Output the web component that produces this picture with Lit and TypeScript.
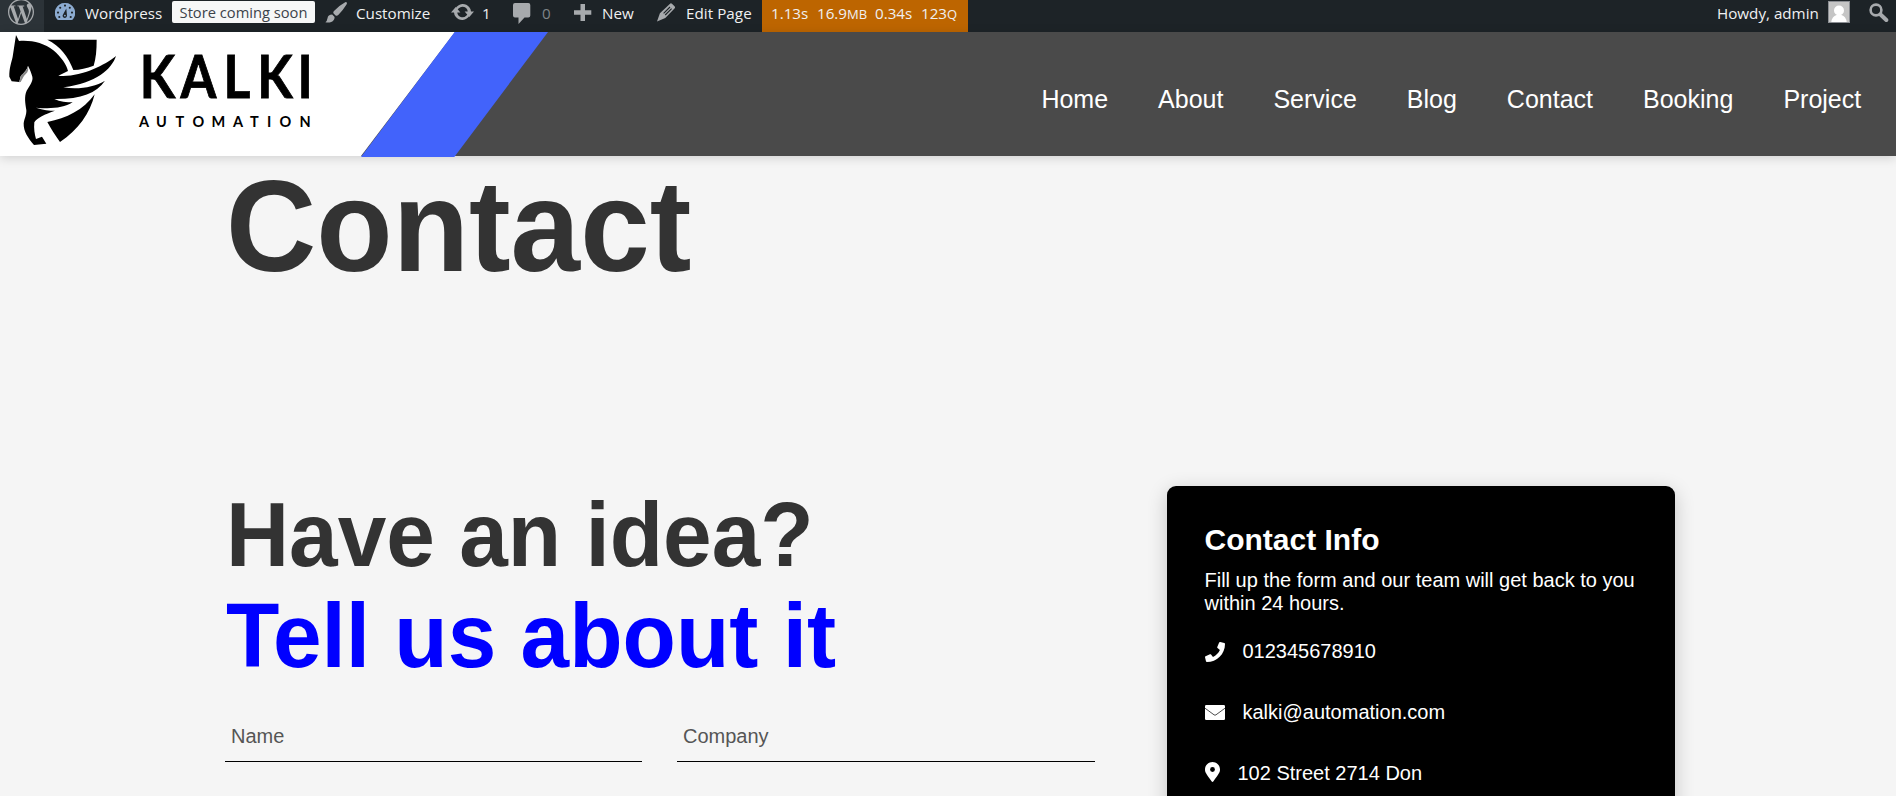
import { LitElement, html, css } from "lit";
import { customElement } from "lit/decorators.js";

const WP_PATH =
  "M21.469 6.825c.84 1.537 1.318 3.3 1.318 5.175 0 3.979-2.156 7.456-5.363 9.325l3.295-9.527c.615-1.54.82-2.771.82-3.864 0-.405-.026-.78-.07-1.11m-7.981.105c.647-.03 1.232-.105 1.232-.105.582-.075.514-.93-.067-.899 0 0-1.755.135-2.88.135-1.064 0-2.85-.15-2.85-.15-.585-.03-.661.855-.075.885 0 0 .54.061 1.125.09l1.68 4.605-2.37 7.08L5.354 6.9c.649-.03 1.234-.1 1.234-.1.585-.075.516-.93-.065-.896 0 0-1.746.138-2.874.138-.2 0-.438-.008-.69-.015C4.911 3.15 8.235 1.215 12 1.215c2.809 0 5.365 1.072 7.286 2.833-.046-.003-.091-.009-.141-.009-1.06 0-1.812.923-1.812 1.914 0 .89.513 1.643 1.06 2.531.411.72.89 1.643.89 2.977 0 .915-.354 1.994-.821 3.479l-1.075 3.585-3.9-11.61.001.014zM12 22.784c-1.059 0-2.081-.153-3.048-.437l3.237-9.406 3.315 9.087c.024.053.05.101.078.149-1.12.393-2.325.609-3.582.609M1.211 12c0-1.564.336-3.05.935-4.39L7.29 21.709C3.694 19.96 1.212 16.271 1.211 12M12 0C5.385 0 0 5.385 0 12s5.385 12 12 12 12-5.385 12-12S18.615 0 12 0";

@customElement("admin-bar")
class AdminBar extends LitElement {
  static styles = css`
    :host {
      display: grid;
      grid-template-columns: 44px 128px 143px 136px 62px 61px 83px 105px 206px 1fr 111px 41px 27px;
      height: 32px;
      background: #1d2327;
      color: #f0f0f1;
      font: 15.2px/22px "Open Sans", "Noto Sans", sans-serif;
      white-space: nowrap;
      overflow: hidden;
    }
    .item { display: flex; align-items: flex-start; }
    svg { display: block; flex: none; fill: #a7aaad; }
    .label { display: block; padding-top: 2px; }
    .wp { background: #2c3338; }
    .wp svg { margin: -1px 0 0 8px; }
    .site { padding-left: 11px; }
    .site svg { fill: #8cabd0; margin-top: 3px; }
    .site .label { margin-left: 10px; }
    .badge {
      height: 22px;
      margin-top: 1px;
      border-radius: 2px;
      background: #f6f7f7;
      color: #3c434a;
      justify-content: center;
      font-size: 14.7px;
    }
    .badge .label { padding-top: 0; }
    .customize { padding-left: 10px; }
    .customize svg { margin-top: 2px; }
    .customize .label { margin-left: 9px; }
    .updates svg { margin-top: 3px; }
    .updates .label { margin-left: 8px; }
    .comments svg { margin-top: 3px; }
    .comments .label { margin-left: 11px; color: #7f8488; }
    .new svg { margin-top: 4px; }
    .new .label { margin-left: 10px; }
    .edit svg { margin-top: 3px; }
    .edit .label { margin-left: 10px; letter-spacing: 0.05px; }
    .stats { background: #bd6500; padding-left: 9px; }
    .stats .label { width: 46px; }
    .stats .label.memory { width: 58px; }
    .stats .label.time { width: 46px; }
    small { font-size: 13px; }
    .avatar { width: 20px; height: 20px; margin-top: 1px; border: 1px solid #8c8f94; background: #c5c5c5; }
    .avatar svg { fill: #fff; }
    .search svg { margin-top: 3px; }
  `;

  render() {
    return html`
      <div class="item wp"><svg width="26" height="26" viewBox="0 0 24 24"><path d=${WP_PATH} /></svg></div>
      <div class="item site">
        <svg width="20" height="17" viewBox="0 0 20 17">
          <path d="M10 0A10 10 0 0 1 18.3 15.8Q17.6 17 16.4 17H3.6Q2.4 17 1.7 15.8A10 10 0 0 1 10 0Z" />
          <g fill="#1d2327">
            <circle cx="10" cy="2.6" r="1.05" /><circle cx="5.2" cy="4.7" r="1.05" /><circle cx="14.8" cy="4.7" r="1.05" />
            <circle cx="3" cy="9.6" r="1.05" /><circle cx="17" cy="9.6" r="1.05" />
            <circle cx="4.3" cy="14" r="1.05" /><circle cx="15.7" cy="14" r="1.05" />
            <path d="M11.3 5.5L12 12.6A2.2 2.2 0 1 1 8.2 11.2Z" />
          </g>
          <circle cx="9.9" cy="12.6" r="0.9" />
        </svg>
        <span class="label">Wordpress</span>
      </div>
      <div class="item badge"><span class="label">Store coming soon</span></div>
      <div class="item customize">
        <svg width="22" height="21" viewBox="0 0 22 21">
          <path d="M21.5 0.2Q22.4 1 21.5 2.4Q17.6 8.6 13.5 12.7Q12 14.2 10.6 13.5L8.6 11.6Q7.8 10.3 9 9Q13.5 4 20.2 0.3Q21 -0.2 21.5 0.2Z" />
          <path d="M7.2 12.6L9.6 15Q9.6 18.6 6.2 20Q3.5 21 0.4 20.3Q2.2 18.8 2.5 16.2Q3 12.7 7.2 12.6Z" />
        </svg>
        <span class="label">Customize</span>
      </div>
      <div class="item updates">
        <svg width="23" height="18" viewBox="0 0 23 18">
          <path d="M4.5 5.5A8.2 8.2 0 0 1 18.5 4.5Q19.8 6.2 20 8.6H23L18.3 14L13.6 8.6H16.7A5.2 5.2 0 0 0 7.8 5.3L5.9 7.2Z" />
          <path d="M18.5 12.5A8.2 8.2 0 0 1 4.5 13.5Q3.2 11.8 3 9.4H0L4.7 4L9.4 9.4H6.3A5.2 5.2 0 0 0 15.2 12.7L17.1 10.8Z" />
        </svg>
        <span class="label">1</span>
      </div>
      <div class="item comments">
        <svg width="18" height="21" viewBox="0 0 18 21"><path d="M2 0H15.3Q17.3 0 17.3 2V12.5Q17.3 14.5 15.3 14.5H11.5L5.5 21V14.5H2Q0 14.5 0 12.5V2Q0 0 2 0Z" /></svg>
        <span class="label">0</span>
      </div>
      <div class="item new">
        <svg width="18" height="17" viewBox="0 0 18 17"><path d="M6.5 0H11V6.3H17.3V10.7H11V17H6.5V10.7H0V6.3H6.5Z" /></svg>
        <span class="label">New</span>
      </div>
      <div class="item edit">
        <svg width="19" height="19" viewBox="0 0 19 19">
          <path d="M12.8 0.9Q13.9 -0.2 15.2 0.9L17.5 3.3Q18.6 4.5 17.5 5.6L8.3 15L0 18.6L2.9 10.3Z" />
          <path d="M13 4L6.6 10.4M14.6 5.6L8.2 12" fill="none" stroke="#1d2327" stroke-width="1.1" />
        </svg>
        <span class="label">Edit Page</span>
      </div>
      <div class="item stats">
        <span class="label">1.13s</span><span class="label memory">16.9<small>MB</small></span>
        <span class="label time">0.34s</span><span class="label">123<small>Q</small></span>
      </div>
      <div></div>
      <div class="item howdy"><span class="label">Howdy, admin</span></div>
      <div class="item">
        <div class="avatar">
          <svg width="20" height="20" viewBox="0 0 20 20"><circle cx="10" cy="8.5" r="5" /><path d="M2.3 20Q3 14.5 7.5 13H12.5Q17 14.5 17.7 20Z" /></svg>
        </div>
      </div>
      <div class="item search">
        <svg width="20" height="20" viewBox="0 0 20 20">
          <circle cx="7" cy="7" r="5.4" fill="none" stroke="#a7aaad" stroke-width="2.6" />
          <path d="M11.5 11.5L17.3 17" stroke="#a7aaad" stroke-width="4" stroke-linecap="round" />
        </svg>
      </div>
    `;
  }
}

@customElement("site-header")
class SiteHeader extends LitElement {
  static styles = css`
    :host {
      display: flex;
      justify-content: space-between;
      height: 124px;
      background: #4a4a4a;
      box-shadow: 0 2px 10px rgba(0, 0, 0, 0.15);
    }
    .brand { display: block; flex: none; margin-bottom: -1px; }
    .kalki { font: 700 60px Lato, sans-serif; stroke: #000; stroke-width: 0.9px; }
    .automation { font: 700 14.5px Lato, sans-serif; }
    nav {
      display: flex;
      gap: 50px;
      padding: 53px 34.8px 0 0;
      font: 25px/29px "Liberation Sans", Arial, sans-serif;
      color: #fff;
    }
  `;

  render() {
    return html`
      <svg class="brand" width="550" height="125" viewBox="0 0 550 125">
        <path d="M0 0H455L361 124H0Z" fill="#fff" />
        <path d="M454.7 0H548L454.3 125H361Z" fill="#4263fb" />
        <g transform="translate(0 -7) scale(0.33333)">
          <path d="M48 30L57 48C95 45 132 54 160 76C184 96 200 120 204 138L175 152C240 158 312 122 348 93C335 132 290 174 190 187C235 195 284 186 315 167C290 205 240 223 163 222C180 230 200 232 218 232C190 250 150 252 108 248C130 256 148 257 165 257C135 268 110 278 103 292C101 312 104 328 108 342L126 335L139 356L102 360C85 340 70 320 71 295C73 280 80 270 79 255C76 235 72 215 80 197C90 180 100 168 97 155C93 138 86 128 84 122C80 138 68 146 62 154L58 171L35 169L28 155C27 130 35 110 38 95Z" />
          <path d="M64 150Q80 138 84 124Q86 136 82 142Q70 152 62 171L57 172Z" fill="#888" />
          <path d="M142 44H290C290 75 288 100 281 122C260 130 240 134 220 135C205 95 180 62 142 44Z" />
          <path d="M284 208C270 265 235 315 180 351C165 330 152 310 142 291C200 280 250 255 284 208Z" />
        </g>
        <g transform="translate(0 66.3) scale(0.86 1)">
          <text class="kalki" x="162.5 210 260 299 346" y="0">KALKI</text>
        </g>
        <text class="automation" x="139 156 175.5 192.5 211.5 233 250 267 279.5 299.5" y="95">AUTOMATION</text>
      </svg>
      <nav>
        ${["Home", "About", "Service", "Blog", "Contact", "Booking", "Project"].map((label) => html`<span>${label}</span>`)}
      </nav>
    `;
  }
}

@customElement("contact-card")
class ContactCard extends LitElement {
  static styles = css`
    :host {
      display: block;
      box-sizing: border-box;
      width: 508px;
      height: 420px;
      padding: 37px 37.5px;
      border-radius: 9px;
      background: #000;
      color: #fff;
      box-shadow: 0 5px 20px rgba(0, 0, 0, 0.2);
      font: 20px/23px "Liberation Sans", Arial, sans-serif;
    }
    h2 { margin: 0; font-size: 30px; line-height: 34px; }
    p { margin: 12px 0 0; }
    .row { display: flex; align-items: center; height: 23px; margin-top: 38px; gap: 18px; }
    .row.first { margin-top: 25px; }
    svg { display: block; fill: #fff; }
    .pin { margin-top: -4px; }
  `;

  render() {
    return html`
      <h2>Contact Info</h2>
      <p>Fill up the form and our team will get back to you within 24 hours.</p>
      <div class="row first">
        <svg width="20" height="20" viewBox="0 0 512 512"><path d="M493.4 24.6l-104-24c-11.3-2.6-22.9 3.3-27.5 13.9l-48 112c-4.2 9.8-1.4 21.3 6.9 28l60.6 49.6c-36 76.7-98.9 140.5-177.2 177.2l-49.6-60.6c-6.8-8.3-18.2-11.1-28-6.9l-112 48C3.9 366.5-2 378.1.6 389.4l24 104C27.1 504.2 36.7 512 48 512c256.1 0 464-207.5 464-464 0-11.2-7.7-20.9-18.6-23.4z" /></svg>
        <span>012345678910</span>
      </div>
      <div class="row">
        <svg width="20" height="15" viewBox="0 0 20 15">
          <rect width="20" height="15" rx="1.2" />
          <path d="M0 3.2L9 9.8Q10 10.6 11 9.8L20 3.2" fill="none" stroke="#000" stroke-width="0.7" />
        </svg>
        <span>kalki@automation.com</span>
      </div>
      <div class="row">
        <svg class="pin" width="15" height="20" viewBox="0 0 384 512">
          <path d="M172.268 501.67C26.97 291.031 0 269.413 0 192 0 85.961 85.961 0 192 0s192 85.961 192 192c0 77.413-26.97 99.031-172.268 309.67-9.535 13.774-29.93 13.773-39.464 0z" />
          <circle cx="192" cy="192" r="62" fill="#000" />
        </svg>
        <span>102 Street 2714 Don</span>
      </div>
    `;
  }
}

@customElement("app-root")
class AppRoot extends LitElement {
  static styles = css`
    :host {
      display: flex;
      flex-direction: column;
      height: 796px;
      overflow: hidden;
      background: #f5f5f5;
      color: #333;
      font-family: "Liberation Sans", Arial, sans-serif;
    }
    admin-bar, site-header { flex: none; }
    main { padding: 0 221px 0 225px; }
    h1 {
      margin: 0;
      padding-left: 1px;
      font-size: 125px;
      line-height: 143px;
      transform: scaleY(1.04);
      transform-origin: 0 113px;
    }
    .columns { display: flex; justify-content: space-between; margin-top: 187px; }
    .form { width: 870px; }
    .title {
      padding-left: 1px;
      font-size: 87.4px;
      line-height: 101px;
      font-weight: 700;
      transform: scaleY(1.045);
      transform-origin: 0 79px;
    }
    .blue { color: #00f; }
    .fields { display: grid; grid-template-columns: 417px 418px; gap: 35px; margin-top: 29px; }
    .field { height: 44px; padding: 0 6px; border-bottom: 1px solid #000; font-size: 20px; line-height: 39px; color: #555; }
  `;

  render() {
    return html`
      <admin-bar></admin-bar>
      <site-header></site-header>
      <main>
        <h1>Contact</h1>
        <section class="columns">
          <div class="form">
            <div class="title">Have an idea?</div>
            <div class="title blue">Tell us about it</div>
            <div class="fields">
              <div class="field">Name</div>
              <div class="field">Company</div>
            </div>
          </div>
          <contact-card></contact-card>
        </section>
      </main>
    `;
  }
}
